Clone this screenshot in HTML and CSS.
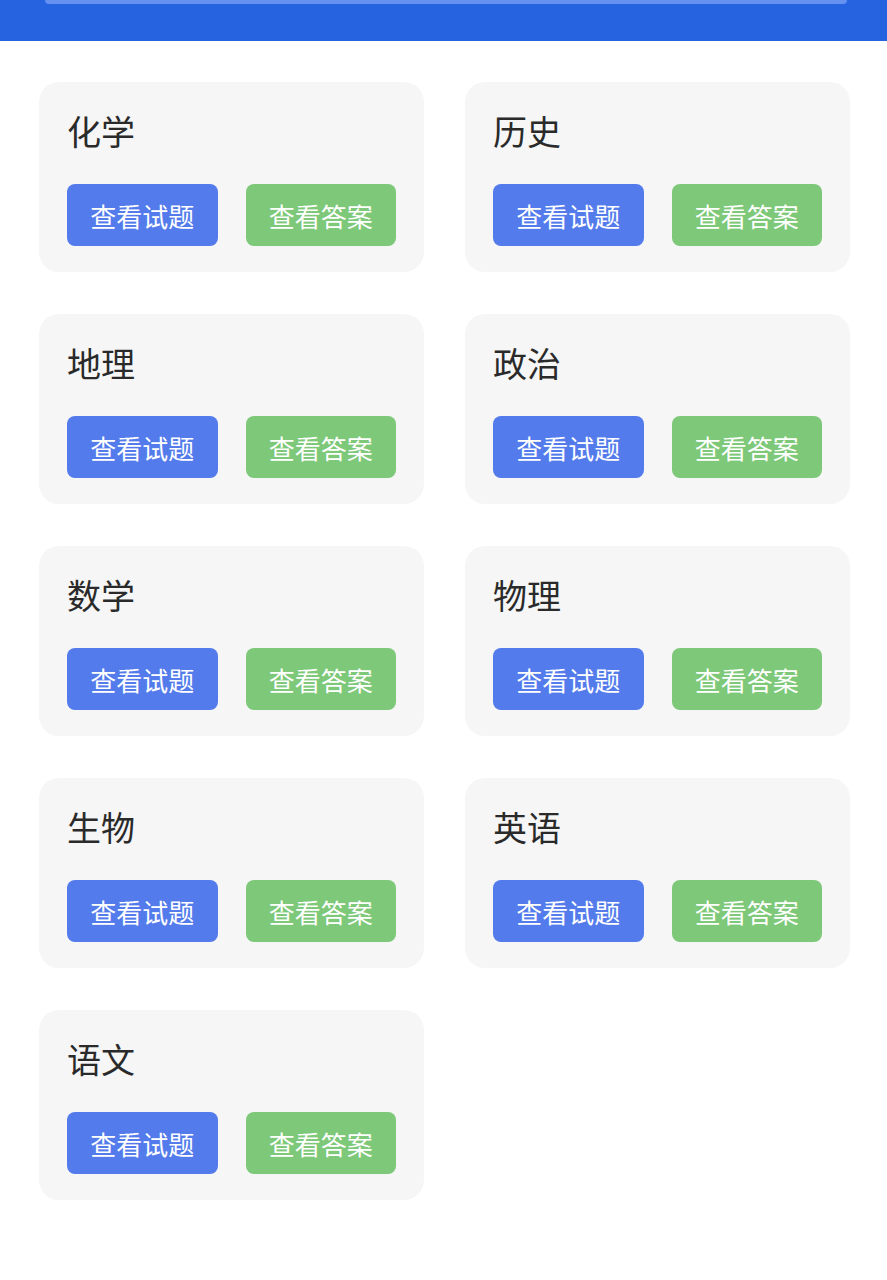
FILE: index.html
```html
<!DOCTYPE html>
<html>

<head>
    <title>试题答案</title>
    <link rel="stylesheet" href="styles.css">
</head>

<body>
    <div class="header">
        <div class="search-bar"></div>
    </div>

    <div class="subject-list">
        <div class="subject-card">
            <div class="subject-name">化学</div>
            <div class="button-row">
                <button class="btn btn-paper">查看试题</button>
                <button class="btn btn-answer">查看答案</button>
            </div>
        </div>
        <div class="subject-card">
            <div class="subject-name">历史</div>
            <div class="button-row">
                <button class="btn btn-paper">查看试题</button>
                <button class="btn btn-answer">查看答案</button>
            </div>
        </div>
        <div class="subject-card">
            <div class="subject-name">地理</div>
            <div class="button-row">
                <button class="btn btn-paper">查看试题</button>
                <button class="btn btn-answer">查看答案</button>
            </div>
        </div>
        <div class="subject-card">
            <div class="subject-name">政治</div>
            <div class="button-row">
                <button class="btn btn-paper">查看试题</button>
                <button class="btn btn-answer">查看答案</button>
            </div>
        </div>
        <div class="subject-card">
            <div class="subject-name">数学</div>
            <div class="button-row">
                <button class="btn btn-paper">查看试题</button>
                <button class="btn btn-answer">查看答案</button>
            </div>
        </div>
        <div class="subject-card">
            <div class="subject-name">物理</div>
            <div class="button-row">
                <button class="btn btn-paper">查看试题</button>
                <button class="btn btn-answer">查看答案</button>
            </div>
        </div>
        <div class="subject-card">
            <div class="subject-name">生物</div>
            <div class="button-row">
                <button class="btn btn-paper">查看试题</button>
                <button class="btn btn-answer">查看答案</button>
            </div>
        </div>
        <div class="subject-card">
            <div class="subject-name">英语</div>
            <div class="button-row">
                <button class="btn btn-paper">查看试题</button>
                <button class="btn btn-answer">查看答案</button>
            </div>
        </div>
        <div class="subject-card">
            <div class="subject-name">语文</div>
            <div class="button-row">
                <button class="btn btn-paper">查看试题</button>
                <button class="btn btn-answer">查看答案</button>
            </div>
        </div>
    </div>
</body>

</html>
```

FILE: styles.css
```css
body {
    margin: 0;
    font-family: "Noto Sans CJK SC", "Noto Sans", sans-serif;
    background-color: #ffffff;
}

/* 顶部蓝色栏 */
.header {
    height: 41px;
    background-color: #2663e1;
    padding: 0 40px 0 45px;
}

.search-bar {
    height: 4px;
    background-color: #6592f0;
    border-radius: 0 0 8px 8px;
}

/* 科目列表 */
.subject-list {
    display: grid;
    grid-template-columns: 385px 385px;
    column-gap: 41px;
    row-gap: 42px;
    padding: 41px 0 0 39px;
}

.subject-card {
    background-color: #f6f6f6;
    border-radius: 20px;
    padding: 27px 28px 26px;
    height: 137px;
}

.subject-name {
    font-size: 34px;
    line-height: 44px;
    color: #2a2a2a;
    margin-bottom: 31px;
}

.button-row {
    display: flex;
    gap: 28px;
}

.btn {
    width: 151px;
    height: 62px;
    border: none;
    border-radius: 8px;
    font-family: inherit;
    font-size: 26px;
    color: #ffffff;
    padding: 0;
    cursor: pointer;
}

.btn-paper {
    background-color: #537bec;
}

.btn-answer {
    background-color: #7dc879;
}
```
